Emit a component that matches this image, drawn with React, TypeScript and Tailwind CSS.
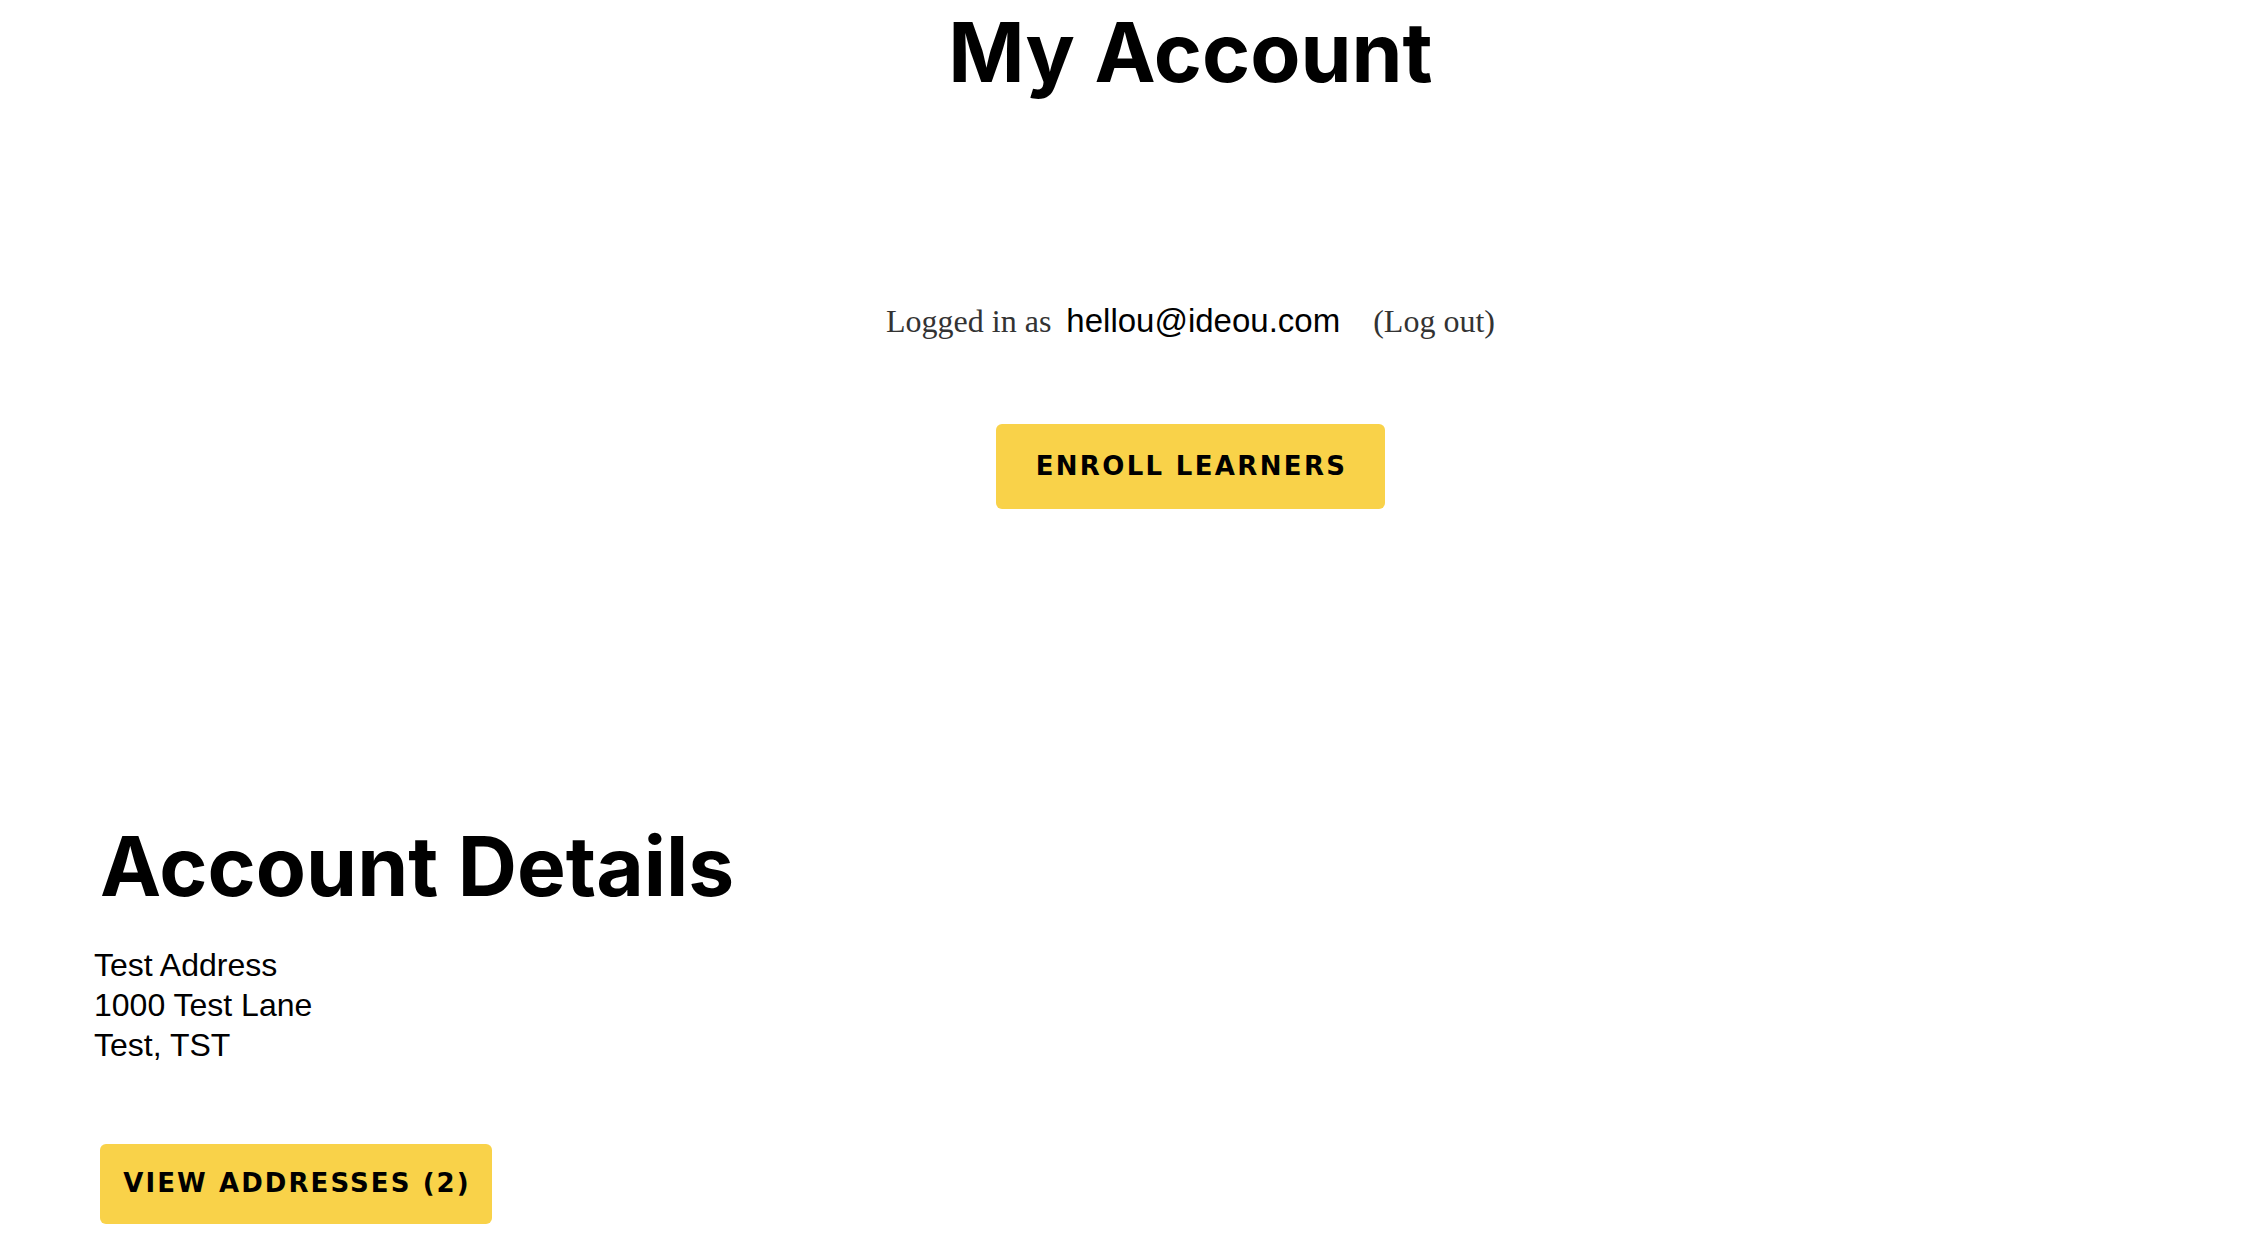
import React from "react";

const gotham = { fontFamily: "Inter, 'Noto Sans', sans-serif" };
const btnFont = { fontFamily: "'DejaVu Sans', Inter, sans-serif" };

export default function App() {
  return (
    <div className="min-h-[1252px] w-full bg-white text-black">
      <div className="pl-[123px] flex flex-col items-center">
        <h1 className="mt-[12px] text-[82px] leading-none font-bold" style={gotham}>
          My Account
        </h1>
        <div className="mt-[202px] flex items-baseline">
          <span className="text-[32px] text-[#333] font-['Liberation_Serif',serif]">
            Logged in as
          </span>
          <span className="ml-[15px] text-[33px] text-black font-['Liberation_Sans',Arial,sans-serif]">
            hellou@ideou.com
          </span>
          <span className="ml-[33px] text-[32px] text-[#333] font-['Liberation_Serif',serif]">
            (Log out)
          </span>
        </div>
        <button
          className="mt-[78px] h-[85px] w-[389px] pl-[2px] rounded-[6px] bg-[#f9d249] text-[26px] font-bold tracking-[0.09em] text-black"
          style={btnFont}
        >
          ENROLL LEARNERS
        </button>
      </div>
      <div className="mt-[317px] pl-[100px]">
        <h2 className="text-[82px] leading-none font-bold" style={gotham}>
          Account Details
        </h2>
        <div className="mt-[37px] -ml-[6px] text-[32px] leading-[40px] font-['Liberation_Sans',Arial,sans-serif]">
          <div>Test Address</div>
          <div>1000 Test Lane</div>
          <div>Test, TST</div>
        </div>
        <button
          className="mt-[79px] h-[80px] w-[392px] pl-[2px] rounded-[6px] bg-[#f9d249] text-[26px] font-bold tracking-[0.08em] text-black"
          style={btnFont}
        >
          VIEW ADDRESSES (2)
        </button>
      </div>
    </div>
  );
}
